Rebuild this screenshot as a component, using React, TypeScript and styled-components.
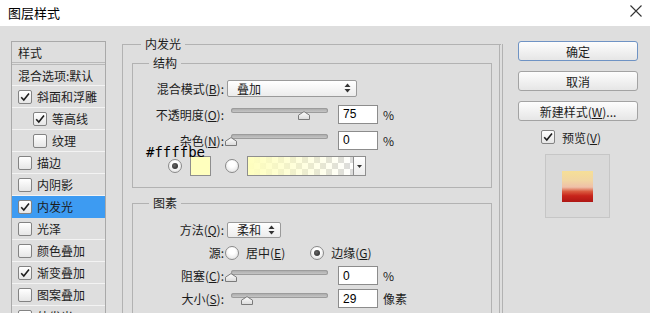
import React from "react";
import styled, { createGlobalStyle } from "styled-components";

const GlobalStyle = createGlobalStyle`
  html, body {
    margin: 0;
    padding: 0;
  }
  body {
    width: 650px;
    height: 313px;
    overflow: hidden;
    background: #dedede;
    font-family: "Noto Sans CJK SC", "Liberation Sans", sans-serif;
    font-size: 12px;
    color: #1c1c1c;
  }
`;

interface StyleItem {
  label: string;
  checked?: boolean;
  nested?: boolean;
  selected?: boolean;
}

const STYLE_ITEMS: StyleItem[] = [
  { label: "斜面和浮雕", checked: true },
  { label: "等高线", checked: true, nested: true },
  { label: "纹理", nested: true },
  { label: "描边" },
  { label: "内阴影" },
  { label: "内发光", checked: true, selected: true },
  { label: "光泽" },
  { label: "颜色叠加" },
  { label: "渐变叠加", checked: true },
  { label: "图案叠加" },
  { label: "外发光" },
  { label: "投影" },
];

export default function App() {
  return (
    <Window>
      <GlobalStyle />
      <TitleBar>
        <Title>图层样式</Title>
        <CloseIcon viewBox="0 0 12 12">
          <path d="M0.5 0.5 L11.5 11.5 M11.5 0.5 L0.5 11.5" />
        </CloseIcon>
      </TitleBar>

      <Body>
        <StyleList>
          <ListHead>样式</ListHead>
          <BlendRow>混合选项:默认</BlendRow>
          {STYLE_ITEMS.map((item) => (
            <StyleRow
              key={item.label}
              $nested={item.nested}
              $selected={item.selected}
            >
              <CheckBox checked={item.checked} />
              <RowText>{item.label}</RowText>
            </StyleRow>
          ))}
        </StyleList>

        <OuterGroup>
          <Legend $indent={18}>内发光</Legend>

          <InnerGroup $gapTop={3} $padTop={4} $padBottom={8}>
            <Legend $indent={16}>结构</Legend>
            <FormRow $h={26}>
              <FieldLabel>
                混合模式(<u>B</u>):
              </FieldLabel>
              <Select $w={130} $h={17}>
                叠加
                <UpDown />
              </Select>
            </FormRow>
            <FormRow $h={26}>
              <FieldLabel>
                不透明度(<u>O</u>):
              </FieldLabel>
              <Slider pos={75} />
              <NumField readOnly value="75" />
              <Unit>%</Unit>
            </FormRow>
            <FormRow $h={26}>
              <FieldLabel>
                杂色(<u>N</u>):
              </FieldLabel>
              <Slider pos={0} />
              <NumField readOnly value="0" />
              <Unit>%</Unit>
            </FormRow>
            <FormRow $h={26}>
              <HexNote>#ffffbe</HexNote>
              <Radio checked ml={35} />
              <Swatch />
              <Radio ml={14} />
              <GradientBar />
              <GradientDrop>
                <svg width="5" height="3" viewBox="0 0 5 3">
                  <polygon points="0,0 5,0 2.5,3" fill="#333" />
                </svg>
              </GradientDrop>
            </FormRow>
          </InnerGroup>

          <InnerGroup $gapTop={7} $padTop={7} $padBottom={24}>
            <Legend $indent={16}>图素</Legend>
            <FormRow $h={23}>
              <FieldLabel>
                方法(<u>Q</u>):
              </FieldLabel>
              <Select $w={54} $h={16}>
                柔和
                <UpDown />
              </Select>
            </FormRow>
            <FormRow $h={23}>
              <FieldLabel>源:</FieldLabel>
              <Radio ml={1} />
              <OptText>
                居中(<u>E</u>)
              </OptText>
              <Radio checked ml={25} />
              <OptText>
                边缘(<u>G</u>)
              </OptText>
            </FormRow>
            <FormRow $h={23}>
              <FieldLabel>
                阻塞(<u>C</u>):
              </FieldLabel>
              <Slider pos={0} />
              <NumField readOnly value="0" />
              <Unit>%</Unit>
            </FormRow>
            <FormRow $h={23}>
              <FieldLabel>
                大小(<u>S</u>):
              </FieldLabel>
              <Slider pos={16.5} />
              <NumField readOnly value="29" />
              <Unit>像素</Unit>
            </FormRow>
          </InnerGroup>
        </OuterGroup>

        <SideColumn>
          <DialogButton $primary>确定</DialogButton>
          <DialogButton>取消</DialogButton>
          <DialogButton>
            新建样式(<u>W</u>)...
          </DialogButton>
          <PreviewToggle>
            <CheckBox checked />
            <span>
              预览(<u>V</u>)
            </span>
          </PreviewToggle>
          <PreviewFrame>
            <PreviewThumb />
          </PreviewFrame>
        </SideColumn>
      </Body>
    </Window>
  );
}

function CheckBox({ checked }: { checked?: boolean }) {
  return (
    <CheckFrame>
      {checked && (
        <svg width="12" height="12" viewBox="0 0 12 12">
          <path
            d="M2.2 6.2 L4.8 9 L10 2.6"
            fill="none"
            stroke="#1e1e1e"
            strokeWidth="1.6"
          />
        </svg>
      )}
    </CheckFrame>
  );
}

function Radio({ checked, ml }: { checked?: boolean; ml: number }) {
  return <RadioCircle $checked={checked} style={{ marginLeft: ml }} />;
}

function Slider({ pos }: { pos: number }) {
  return (
    <SliderBox>
      <Track />
      <Thumb viewBox="0 0 12 9" style={{ left: `calc(${pos}% - 6px)` }}>
        <defs>
          <linearGradient id="thumbFill" x1="0" y1="0" x2="0" y2="1">
            <stop offset="0" stopColor="#ffffff" />
            <stop offset="1" stopColor="#dadada" />
          </linearGradient>
        </defs>
        <path
          d="M0.5 8.5 V4.2 L6 0.6 L11.5 4.2 V8.5 Z"
          fill="url(#thumbFill)"
          stroke="#7a7a7a"
        />
      </Thumb>
    </SliderBox>
  );
}

function UpDown() {
  return (
    <svg width="7" height="10" viewBox="0 0 7 10">
      <polygon points="0.5,4 3.5,0.5 6.5,4" fill="#333" />
      <polygon points="0.5,6 3.5,9.5 6.5,6" fill="#333" />
    </svg>
  );
}

const Window = styled.div`
  width: 650px;
  height: 313px;
  overflow: hidden;
  display: flex;
  flex-direction: column;
`;

const TitleBar = styled.div`
  height: 26px;
  flex-shrink: 0;
  box-sizing: border-box;
  background: #ffffff;
  display: flex;
  align-items: center;
  justify-content: space-between;
  padding: 0 8px;
`;

const Title = styled.span`
  font-size: 13px;
  color: #000;
  margin-top: -2px;
`;

const CloseIcon = styled.svg`
  width: 12px;
  height: 12px;
  margin-top: -4px;
  stroke: #333;
  stroke-width: 1.1;
  fill: none;
`;

const Body = styled.div`
  flex: 1;
  display: flex;
  align-items: flex-start;
  padding: 10px 0 0 11px;
  background: #dedede;
`;

const StyleList = styled.div`
  width: 95px;
  flex-shrink: 0;
  box-sizing: border-box;
  margin-top: 5px;
  border: 1px solid #a9a9a9;
`;

const ListHead = styled.div`
  height: 20px;
  display: flex;
  align-items: center;
  padding-left: 6px;
  border-bottom: 3px double #b9b9b9;
`;

const BlendRow = styled.div`
  height: 20px;
  display: flex;
  align-items: center;
  padding-left: 6px;
  border-bottom: 1px solid #f3f3f3;
  white-space: nowrap;
`;

const StyleRow = styled.div<{ $nested?: boolean; $selected?: boolean }>`
  height: 21px;
  display: flex;
  align-items: center;
  padding-left: ${(p) => (p.$nested ? 21 : 6)}px;
  border-bottom: 1px solid ${(p) => (p.$selected ? "#3d9bf2" : "#f3f3f3")};
  background: ${(p) => (p.$selected ? "#3d9bf2" : "transparent")};
`;

const RowText = styled.span`
  margin-left: 5px;
  white-space: nowrap;
`;

const CheckFrame = styled.span`
  width: 14px;
  height: 14px;
  flex-shrink: 0;
  box-sizing: border-box;
  border: 1px solid #838383;
  border-radius: 2px;
  background: linear-gradient(#ffffff, #e6e6e6);
  display: flex;
  align-items: center;
  justify-content: center;
`;

const OuterGroup = styled.fieldset`
  width: 381px;
  flex-shrink: 0;
  box-sizing: border-box;
  margin: 0 0 0 16px;
  padding: 0 0 10px;
  min-width: 0;
  border: 1px solid #b2b2b2;
  border-right: 4px double #b2b2b2;
`;

const InnerGroup = styled.fieldset<{
  $gapTop: number;
  $padTop: number;
  $padBottom: number;
}>`
  margin: ${(p) => p.$gapTop}px 7px 0 9px;
  padding: ${(p) => p.$padTop}px 0 ${(p) => p.$padBottom}px;
  min-width: 0;
  border: 1px solid #b2b2b2;
`;

const Legend = styled.legend<{ $indent: number }>`
  margin-left: ${(p) => p.$indent}px;
  padding: 0 4px;
  line-height: 16px;
  font-size: 12px;
`;

const FormRow = styled.div<{ $h: number }>`
  position: relative;
  height: ${(p) => p.$h}px;
  display: flex;
  align-items: center;
`;

const FieldLabel = styled.span`
  width: 91px;
  flex-shrink: 0;
  text-align: right;
  white-space: nowrap;
`;

const Select = styled.div<{ $w: number; $h: number }>`
  width: ${(p) => p.$w}px;
  height: ${(p) => p.$h}px;
  box-sizing: border-box;
  margin-left: 3px;
  padding: 0 5px 0 9px;
  border: 1px solid #9a9a9a;
  border-radius: 2px;
  background: linear-gradient(#ffffff, #ececec);
  display: flex;
  align-items: center;
  justify-content: space-between;
`;

const SliderBox = styled.div`
  position: relative;
  width: 97px;
  height: 16px;
  flex-shrink: 0;
  margin-left: 7px;
`;

const Track = styled.div`
  position: absolute;
  left: 0;
  right: 0;
  top: 2px;
  height: 5px;
  border-radius: 3px;
  background: linear-gradient(#a6a6a6, #cdcdcd);
  box-shadow: inset 0 0 0 1px #9c9c9c;
`;

const Thumb = styled.svg`
  position: absolute;
  top: 5px;
  width: 12px;
  height: 9px;
`;

const NumField = styled.input`
  width: 40px;
  height: 19px;
  box-sizing: border-box;
  margin: 0 0 0 10px;
  padding: 0 0 0 4px;
  border: 1px solid #8c8c8c;
  border-radius: 0;
  background: #ffffff;
  outline: none;
  font-family: "Liberation Sans", sans-serif;
  font-size: 12px;
  color: #000;
`;

const Unit = styled.span`
  margin-left: 5px;
`;

const OptText = styled.span`
  margin-left: 7px;
  white-space: nowrap;
`;

const RadioCircle = styled.span<{ $checked?: boolean }>`
  position: relative;
  width: 14px;
  height: 14px;
  flex-shrink: 0;
  box-sizing: border-box;
  border: 1px solid #8a8a8a;
  border-radius: 50%;
  background: radial-gradient(circle at 50% 35%, #ffffff 30%, #dcdcdc 100%);

  &::after {
    content: "";
    display: ${(p) => (p.$checked ? "block" : "none")};
    position: absolute;
    left: 3px;
    top: 3px;
    width: 6px;
    height: 6px;
    border-radius: 50%;
    background: radial-gradient(circle at 40% 40%, #666, #222);
  }
`;

const HexNote = styled.span`
  position: absolute;
  left: 13px;
  top: -8px;
  font-family: "DejaVu Sans Mono", "Liberation Mono", monospace;
  font-size: 14px;
  line-height: 14px;
  color: #000;
`;

const Swatch = styled.span`
  width: 21px;
  height: 20px;
  flex-shrink: 0;
  box-sizing: border-box;
  margin-left: 8px;
  border: 1px solid #8e8e8e;
  background: #ffffbe;
`;

const GradientBar = styled.span`
  width: 106px;
  height: 20px;
  flex-shrink: 0;
  box-sizing: border-box;
  margin-left: 8px;
  border: 1px solid #8e8e8e;
  border-right: none;
  background: linear-gradient(
      to right,
      #ffffbe 0%,
      rgba(255, 255, 190, 0.5) 50%,
      rgba(255, 255, 190, 0) 100%
    ),
    repeating-conic-gradient(#dcdcdc 0 25%, #ffffff 0 50%) 0 0 / 12px 12px;
`;

const GradientDrop = styled.span`
  width: 13px;
  height: 20px;
  flex-shrink: 0;
  box-sizing: border-box;
  border: 1px solid #8e8e8e;
  background: linear-gradient(#ffffff, #ececec);
  display: flex;
  align-items: center;
  justify-content: center;
`;

const SideColumn = styled.div`
  width: 120px;
  flex-shrink: 0;
  margin: 5px 0 0 15px;
  display: flex;
  flex-direction: column;
`;

const DialogButton = styled.button<{ $primary?: boolean }>`
  height: 20px;
  margin: 0 0 10px;
  padding: 0;
  border: 1px solid ${(p) => (p.$primary ? "#6f93c4" : "#a3a3a3")};
  border-radius: 3px;
  background: linear-gradient(#fdfdfd, #e6e6e6);
  font-family: "Noto Sans CJK SC", "Liberation Sans", sans-serif;
  font-size: 12px;
  color: #1c1c1c;
`;

const PreviewToggle = styled.div`
  height: 14px;
  margin: -1px 0 0 23px;
  display: flex;
  align-items: center;
  gap: 7px;
  white-space: nowrap;
`;

const PreviewFrame = styled.div`
  width: 65px;
  height: 64px;
  box-sizing: border-box;
  margin: 10px 0 0 27px;
  border: 1px solid #c6c6c6;
  background: #d9d9d9;
  display: flex;
  align-items: center;
  justify-content: center;
`;

const PreviewThumb = styled.div`
  width: 31px;
  height: 31px;
  background: linear-gradient(
    #f6df97 0%,
    #f1d6a2 30%,
    #efc0a8 52%,
    #da5a3e 66%,
    #c8241b 80%,
    #ae1714 100%
  );
`;
